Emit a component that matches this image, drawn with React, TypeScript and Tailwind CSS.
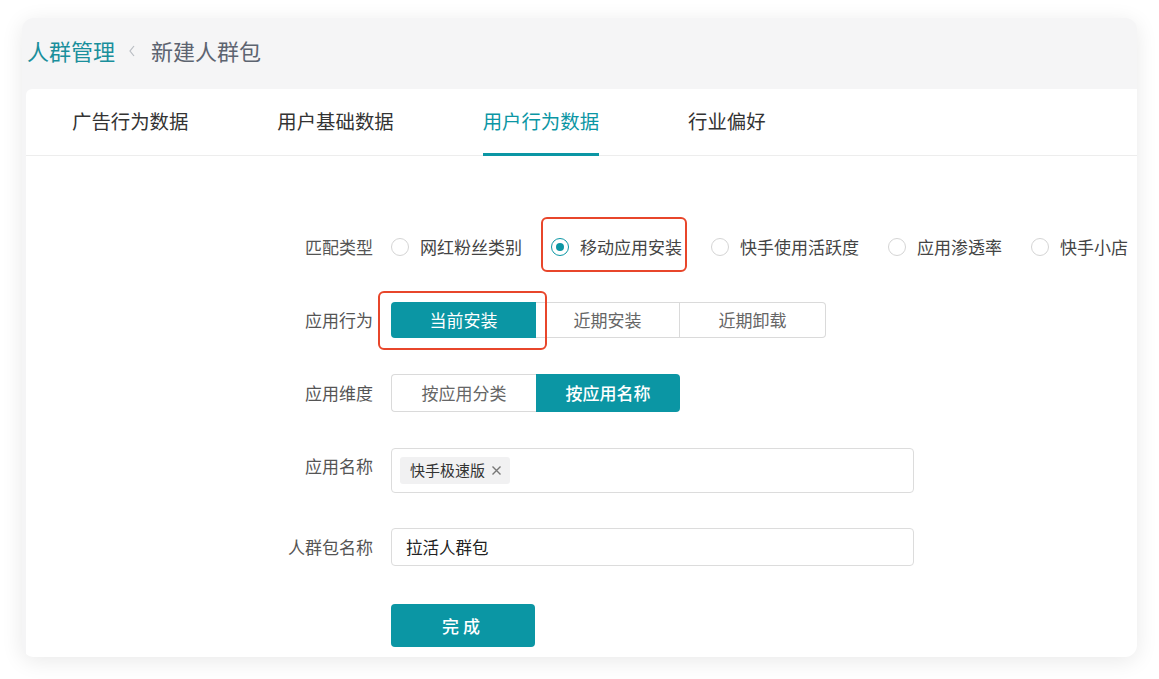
import React from "react";

const TEAL = "#0b96a4";

function Radio({ checked }: { checked?: boolean }) {
  return (
    <span
      className={
        "flex h-[18px] w-[18px] shrink-0 items-center justify-center rounded-full border bg-white " +
        (checked ? "border-[#0b96a4]" : "border-[#d4d4d4]")
      }
    >
      {checked && <span className="h-[8px] w-[8px] rounded-full bg-[#0b96a4]" />}
    </span>
  );
}

function Label({ children }: { children: React.ReactNode }) {
  return (
    <div className="w-[347px] shrink-0 pr-0 text-right text-[17px] text-[#555]">{children}</div>
  );
}

export default function App() {
  const radios = [
    { t: "网红粉丝类别" },
    { t: "移动应用安装", checked: true, boxed: true },
    { t: "快手使用活跃度" },
    { t: "应用渗透率" },
    { t: "快手小店" },
  ];
  return (
    <div
      className="h-[679px] w-[1159px] bg-white pl-[22px] pt-[18px]"
      style={{ fontFamily: '"Noto Sans CJK SC", "Noto Sans", sans-serif' }}
    >
      <div className="flex h-[639px] w-[1115px] flex-col overflow-hidden rounded-[12px] bg-[#f5f5f6] shadow-[0_4px_22px_rgba(0,0,0,0.09)]">
        {/* Breadcrumb */}
        <div className="flex h-[71px] shrink-0 items-center pl-[5px] pb-[6px]">
          <span className="text-[22px] text-[#1a8f9c]">人群管理</span>
          <svg className="ml-[12px] mr-[14px]" width="10" height="14" viewBox="0 0 10 14">
            <path d="M7 2 L3 7 L7 12" fill="none" stroke="#b8bcc2" strokeWidth="1.2" />
          </svg>
          <span className="text-[22px] text-[#5d6470]">新建人群包</span>
        </div>
        {/* Panel */}
        <div className="ml-[4px] flex flex-1 flex-col rounded-tl-[6px] bg-white">
          {/* Tabs */}
          <div className="flex h-[67px] shrink-0 items-stretch gap-[89px] border-b border-[#ededed] pl-[46px]">
            {["广告行为数据", "用户基础数据", "用户行为数据", "行业偏好"].map((t, i) => (
              <div
                key={t}
                className={
                  "relative flex items-center pb-[2px] text-[19.4px] " +
                  (i === 2 ? "text-[#0b96a4]" : "text-[#333]")
                }
              >
                {t}
                {i === 2 && (
                  <span className="absolute bottom-[-1px] left-0 right-0 h-[3px] bg-[#0b96a4]" />
                )}
              </div>
            ))}
          </div>
          {/* Form */}
          <div className="flex flex-col pt-[73px]">
            {/* Row 1 */}
            <div className="flex h-[36px] items-center gap-[18px]">
              <Label>匹配类型</Label>
              <div className="flex items-center gap-[29px]">
                {radios.map((r) => (
                  <div key={r.t} className="relative flex h-[36px] items-center gap-[11px]">
                    <Radio checked={r.checked} />
                    <span className="text-[17px] text-[#444]">{r.t}</span>
                    {r.boxed && (
                      <span className="absolute -bottom-[7px] -left-[10px] -right-[5px] -top-[12px] rounded-[6px] border-[2.5px] border-[#e8462b]" />
                    )}
                  </div>
                ))}
              </div>
            </div>
            {/* Row 2 */}
            <div className="mt-[37px] flex h-[36px] items-center gap-[18px]">
              <Label>应用行为</Label>
              <div className="flex h-[36px]">
                <div className="relative flex w-[145px] items-center justify-center rounded-l-[4px] bg-[#0b96a4] text-[17px] text-white">
                  当前安装
                  <span className="absolute -bottom-[12px] -left-[13px] -right-[11px] -top-[11px] rounded-[6px] border-[2.5px] border-[#e8462b]" />
                </div>
                <div className="flex w-[144px] items-center justify-center border-y border-r border-[#dadada] text-[17px] text-[#666]">
                  近期安装
                </div>
                <div className="flex w-[146px] items-center justify-center rounded-r-[4px] border-y border-r border-[#dadada] text-[17px] text-[#666]">
                  近期卸载
                </div>
              </div>
            </div>
            {/* Row 3 */}
            <div className="mt-[36px] flex h-[38px] items-center gap-[18px]">
              <Label>应用维度</Label>
              <div className="flex h-[38px]">
                <div className="flex w-[145px] items-center justify-center rounded-l-[4px] border border-r-0 border-[#dadada] text-[17px] text-[#666]">
                  按应用分类
                </div>
                <div className="flex w-[144px] items-center justify-center rounded-r-[4px] bg-[#0b96a4] text-[17px] font-medium text-white">
                  按应用名称
                </div>
              </div>
            </div>
            {/* Row 4 */}
            <div className="mt-[36px] flex items-start gap-[18px]">
              <div className="flex h-[36px] items-center">
                <Label>应用名称</Label>
              </div>
              <div className="flex h-[45px] w-[523px] items-center rounded-[4px] border border-[#dcdcdc] px-[8px]">
                <span className="flex h-[27px] items-center gap-[6px] rounded-[3px] bg-[#f1f1f2] pl-[10px] pr-[8px] text-[15px] text-[#333]">
                  快手极速版
                  <svg width="11" height="11" viewBox="0 0 11 11">
                    <path d="M1.5 1.5 L9.5 9.5 M9.5 1.5 L1.5 9.5" stroke="#777" strokeWidth="1.4" />
                  </svg>
                </span>
              </div>
            </div>
            {/* Row 5 */}
            <div className="mt-[35px] flex h-[38px] items-center gap-[18px]">
              <Label>人群包名称</Label>
              <div className="flex h-[38px] w-[523px] items-center rounded-[4px] border border-[#dcdcdc] px-[14px] text-[16.5px] text-[#222]">
                拉活人群包
              </div>
            </div>
            {/* Submit */}
            <div className="mt-[38px] flex gap-[18px]">
              <div className="w-[347px] shrink-0" />
              <button
                className="flex h-[43px] w-[144px] items-center justify-center rounded-[4px] text-[17px] font-medium tracking-[4px] text-white"
                style={{ backgroundColor: TEAL }}
              >
                完成
              </button>
            </div>
          </div>
        </div>
      </div>
    </div>
  );
}
